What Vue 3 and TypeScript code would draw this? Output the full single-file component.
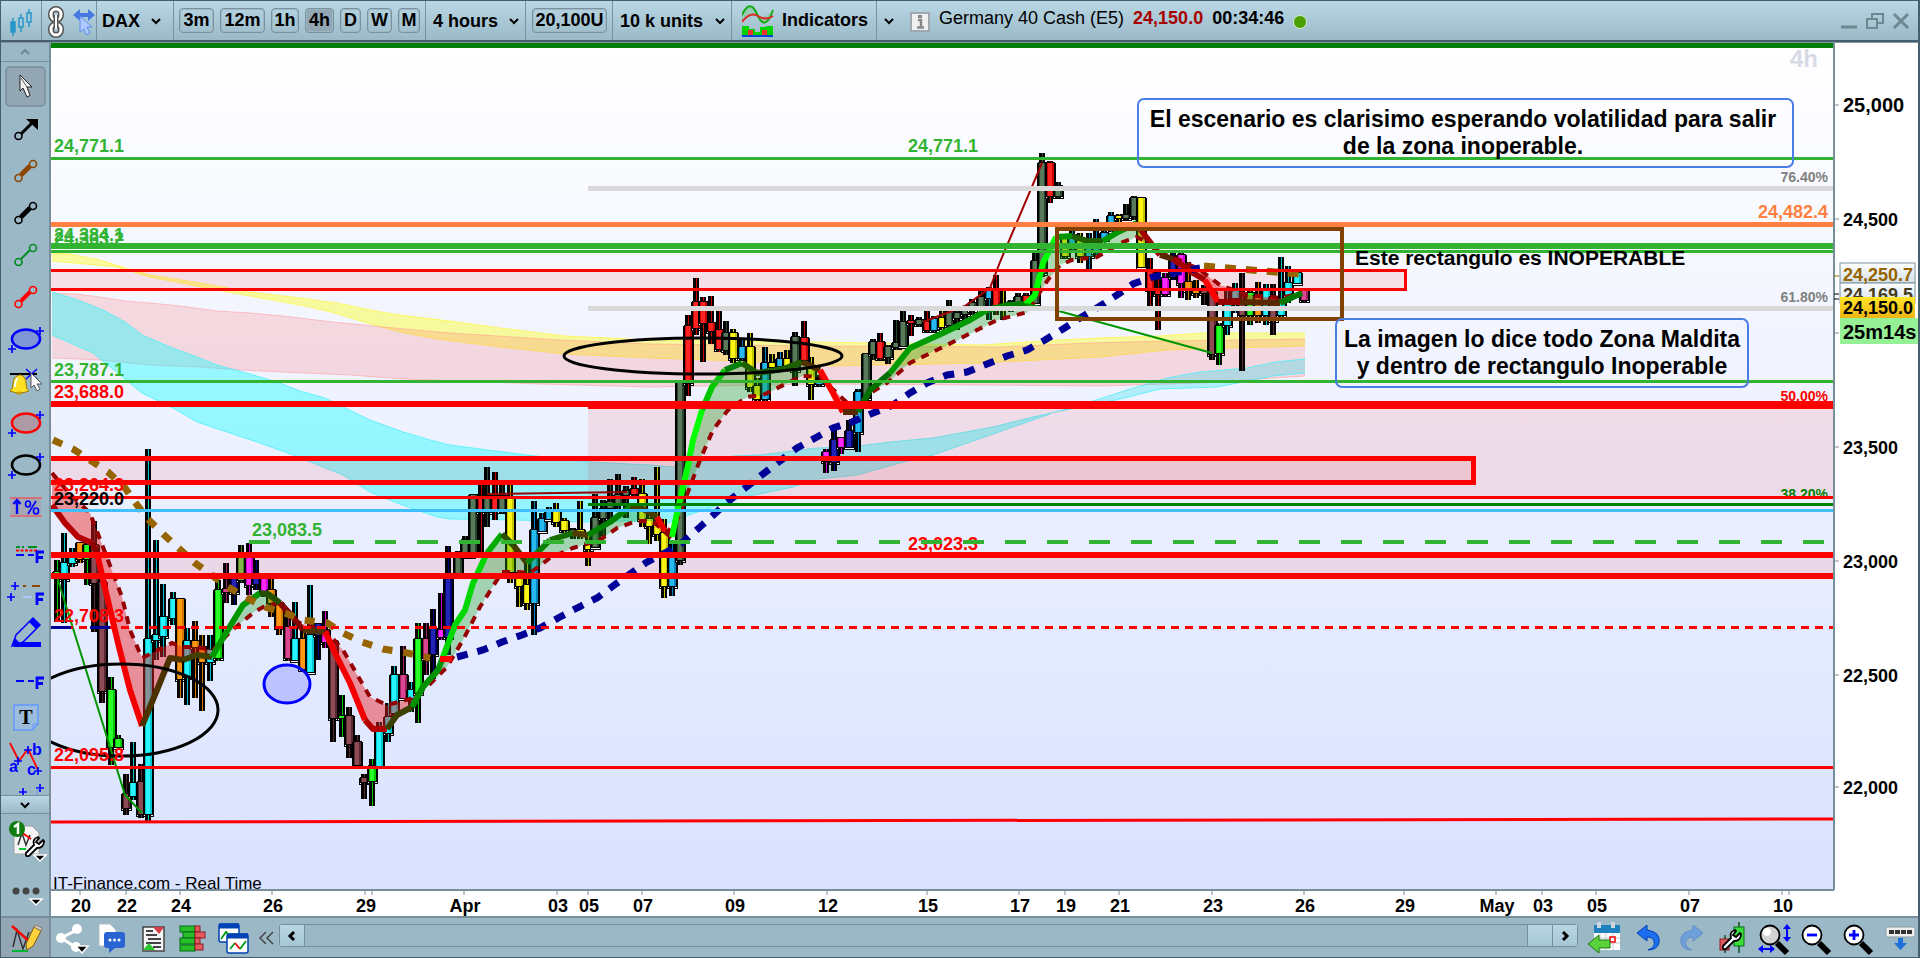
<script setup lang="ts">
type Pt = [number, number]
type Candle = [x: number, high: number, low: number, top: number, bottom: number, tone: string]

const tones: Record<string, { fill: string; shine: string }> = {
  g: { fill: '#00c800', shine: '#28ff28' },
  c: { fill: '#00c8d2', shine: '#28f5ff' },
  m: { fill: '#5a2832', shine: '#8c4b55' },
  o: { fill: '#d27800', shine: '#ff9614' },
  n: { fill: '#000078', shine: '#2323b4' },
  f: { fill: '#d200d2', shine: '#ff28ff' },
  p: { fill: '#a01e64', shine: '#dc4691' },
  l: { fill: '#557d28', shine: '#82b446' },
  d: { fill: '#28462d', shine: '#5a785a' },
  r: { fill: '#c80000', shine: '#ff2323' },
  y: { fill: '#c8c300', shine: '#faf514' },
  b: { fill: '#0082be', shine: '#28b9f0' },
}

const candles: Candle[] = [
  [57, 560, 622, 572, 576, 'g'], [64, 533, 623, 563, 579, 'c'], [72, 548, 567, 556, 563, 'c'], [80, 543, 563, 543, 559, 'o'],
  [87, 540, 585, 545, 559, 'g'], [94, 521, 632, 545, 583, 'm'], [102, 582, 703, 582, 691, 'm'], [111, 677, 765, 690, 747, 'g'],
  [118, 735, 748, 739, 747, 'g'], [126, 774, 815, 794, 808, 'm'], [133, 742, 800, 783, 796, 'c'], [141, 764, 818, 782, 814, 'm'],
  [148, 449, 821, 639, 814, 'c'], [156, 540, 660, 635, 640, 'c'], [163, 584, 657, 617, 636, 'c'], [173, 592, 625, 599, 618, 'c'],
  [180, 598, 698, 599, 679, 'o'], [187, 628, 705, 641, 677, 'c'], [195, 621, 698, 641, 647, 'o'], [202, 635, 711, 647, 662, 'o'],
  [210, 635, 681, 650, 662, 'c'], [218, 580, 661, 590, 658, 'g'], [226, 563, 603, 589, 592, 'p'], [234, 578, 605, 578, 592, 'n'],
  [241, 545, 582, 558, 580, 'l'], [249, 543, 595, 558, 585, 'f'], [256, 560, 590, 577, 584, 'n'], [264, 579, 597, 579, 592, 'f'],
  [271, 579, 617, 590, 603, 'o'], [279, 602, 635, 603, 627, 'o'], [288, 617, 661, 627, 658, 'p'], [295, 602, 660, 639, 660, 'c'],
  [303, 630, 672, 639, 669, 'o'], [310, 585, 673, 635, 672, 'c'], [318, 623, 660, 624, 635, 'n'], [325, 611, 648, 630, 642, 'f'],
  [333, 640, 742, 641, 718, 'm'], [342, 695, 737, 716, 718, 'g'], [349, 707, 758, 716, 744, 'm'], [357, 735, 765, 742, 765, 'm'],
  [364, 774, 799, 778, 782, 'm'], [372, 759, 806, 766, 781, 'g'], [379, 722, 766, 731, 766, 'c'], [388, 703, 742, 717, 733, 'c'],
  [394, 666, 720, 675, 713, 'c'], [403, 646, 698, 675, 698, 'p'], [411, 682, 712, 690, 698, 'c'], [418, 623, 723, 639, 693, 'g'],
  [426, 623, 675, 639, 658, 'p'], [433, 609, 679, 629, 654, 'n'], [441, 593, 640, 630, 637, 'f'], [448, 546, 655, 579, 637, 'n'],
  [458, 551, 575, 555, 573, 'd'], [465, 536, 558, 540, 556, 'd'], [473, 494, 559, 495, 555, 'd'], [481, 485, 553, 496, 512, 'r'],
  [487, 467, 527, 496, 512, 'd'], [495, 472, 520, 496, 510, 'r'], [502, 485, 513, 496, 511, 'd'], [510, 485, 583, 499, 572, 'y'],
  [519, 572, 607, 575, 586, 'y'], [527, 563, 610, 585, 603, 'y'], [534, 501, 635, 530, 603, 'b'], [542, 513, 532, 519, 531, 'b'],
  [549, 507, 520, 510, 519, 'b'], [556, 503, 527, 510, 522, 'y'], [564, 518, 533, 521, 530, 'y'], [573, 528, 539, 530, 532, 'd'],
  [580, 501, 539, 530, 532, 'y'], [588, 533, 566, 545, 549, 'y'], [595, 494, 548, 518, 547, 'd'], [603, 500, 536, 509, 518, 'd'],
  [610, 479, 520, 502, 508, 'd'], [618, 474, 510, 495, 503, 'd'], [626, 486, 518, 491, 495, 'd'], [634, 477, 498, 489, 494, 'r'],
  [642, 479, 527, 494, 519, 'y'], [649, 515, 544, 519, 526, 'y'], [657, 467, 541, 525, 534, 'y'], [664, 519, 598, 533, 586, 'y'],
  [672, 540, 596, 557, 586, 'b'], [680, 383, 565, 383, 560, 'd'], [688, 315, 396, 326, 383, 'r'], [696, 278, 335, 302, 328, 'r'],
  [703, 297, 362, 302, 323, 'r'], [711, 296, 344, 323, 331, 'r'], [719, 311, 352, 330, 349, 'r'], [726, 321, 355, 333, 350, 'd'],
  [733, 329, 363, 333, 358, 'y'], [742, 340, 360, 347, 358, 'b'], [750, 333, 392, 347, 387, 'y'], [757, 378, 409, 386, 399, 'y'],
  [765, 347, 409, 363, 399, 'b'], [772, 354, 373, 363, 367, 'y'], [780, 352, 370, 359, 366, 'b'], [787, 350, 370, 359, 366, 'y'],
  [795, 332, 386, 337, 370, 'd'], [804, 321, 363, 338, 360, 'r'], [811, 357, 400, 367, 384, 'y'], [819, 375, 386, 380, 384, 'b'],
  [826, 449, 473, 452, 461, 'f'], [834, 430, 471, 440, 462, 'n'], [841, 437, 454, 438, 447, 'f'], [849, 420, 448, 431, 447, 'n'],
  [858, 389, 452, 392, 432, 'b'], [866, 353, 400, 354, 398, 'd'], [873, 339, 360, 342, 354, 'd'], [880, 333, 360, 342, 358, 'r'],
  [888, 345, 364, 347, 357, 'd'], [896, 320, 350, 343, 347, 'd'], [903, 311, 347, 322, 346, 'd'], [911, 315, 336, 321, 323, 'r'],
  [919, 317, 327, 320, 324, 'd'], [927, 311, 332, 322, 330, 'r'], [934, 316, 332, 319, 330, 'b'], [942, 311, 330, 318, 327, 'y'],
  [949, 300, 328, 312, 325, 'd'], [957, 310, 330, 313, 318, 'd'], [965, 306, 322, 310, 314, 'd'], [972, 299, 315, 303, 310, 'd'],
  [981, 291, 307, 297, 306, 'd'], [989, 287, 320, 290, 298, 'b'], [996, 275, 315, 290, 305, 'r'], [1003, 290, 320, 304, 308, 'y'],
  [1011, 300, 312, 302, 305, 'b'], [1018, 293, 307, 297, 303, 'd'], [1026, 293, 309, 296, 302, 'r'], [1035, 253, 303, 261, 303, 'd'],
  [1042, 153, 277, 163, 273, 'd'], [1050, 161, 203, 163, 196, 'r'], [1058, 182, 198, 186, 196, 'd'], [1065, 236, 258, 239, 256, 'y'],
  [1072, 229, 250, 235, 245, 'b'], [1080, 233, 263, 238, 256, 'y'], [1089, 233, 271, 240, 256, 'b'], [1096, 219, 257, 242, 252, 'b'],
  [1104, 231, 241, 233, 239, 'b'], [1111, 212, 232, 216, 223, 'b'], [1119, 214, 223, 216, 218, 'y'], [1126, 204, 220, 215, 218, 'd'],
  [1134, 196, 220, 198, 216, 'd'], [1141, 197, 268, 198, 267, 'y'], [1150, 258, 306, 270, 289, 'r'], [1158, 270, 330, 288, 294, 'r'],
  [1165, 273, 296, 278, 294, 'f'], [1173, 253, 280, 258, 277, 'n'], [1181, 250, 298, 255, 283, 'f'], [1188, 262, 300, 282, 290, 'o'],
  [1196, 280, 298, 290, 293, 'o'], [1204, 285, 305, 291, 293, 'm'], [1212, 290, 360, 292, 354, 'm'], [1219, 323, 365, 326, 353, 'g'],
  [1227, 290, 335, 300, 325, 'c'], [1235, 283, 313, 290, 298, 'c'], [1242, 273, 371, 300, 315, 'm'], [1250, 290, 325, 293, 315, 'g'],
  [1258, 282, 323, 295, 315, 'o'], [1266, 284, 325, 291, 315, 'c'], [1273, 284, 335, 297, 320, 'm'], [1281, 257, 317, 303, 315, 'c'],
  [1288, 266, 303, 283, 295, 'c'], [1297, 272, 284, 273, 283, 'c'], [1304, 289, 302, 291, 300, 'p'],
]

const trend: { color: string; pts: Pt[] }[] = [
  { color: '#b40000', pts: [[52, 505], [65, 523], [78, 537], [92, 543]] },
  { color: '#8c0000', pts: [[97, 553]] },
  { color: '#f50000', pts: [[105, 588], [118, 643], [130, 690], [142, 726]] },
  { color: '#4b3200', pts: [[157, 690], [170, 658], [183, 660]] },
  { color: '#414100', pts: [[197, 655], [212, 657]] },
  { color: '#009600', pts: [[220, 643], [232, 623], [243, 605], [260, 593]] },
  { color: '#235000', pts: [[268, 594], [280, 603]] },
  { color: '#820000', pts: [[292, 616], [303, 630]] },
  { color: '#503200', pts: [[325, 632]] },
  { color: '#f50000', pts: [[337, 657], [350, 683], [365, 720]] },
  { color: '#b40000', pts: [[373, 729], [387, 729]] },
  { color: '#3c4100', pts: [[397, 715], [412, 707]] },
  { color: '#009100', pts: [[423, 687], [438, 670], [443, 657]] },
  { color: '#00d700', pts: [[455, 625], [465, 610], [473, 583], [487, 553]] },
  { color: '#00aa00', pts: [[502, 534]] },
  { color: '#285000', pts: [[514, 546]] },
  { color: '#463c00', pts: [[527, 563]] },
  { color: '#0a820a', pts: [[550, 540]] },
  { color: '#146e00', pts: [[573, 533]] },
  { color: '#503c00', pts: [[588, 535]] },
  { color: '#008200', pts: [[610, 522], [630, 507]] },
  { color: '#463c00', pts: [[643, 509], [657, 517]] },
  { color: '#eb0000', pts: [[665, 531]] },
  { color: '#960000', pts: [[672, 537]] },
  { color: '#00ff00', pts: [[678, 508], [687, 470], [693, 440], [702, 410]] },
  { color: '#00c800', pts: [[712, 387], [725, 370]] },
  { color: '#008200', pts: [[742, 363]] },
  { color: '#1e5f00', pts: [[757, 373], [783, 369], [802, 362]] },
  { color: '#503200', pts: [[820, 370]] },
  { color: '#ff0000', pts: [[833, 393], [843, 412]] },
  { color: '#5a2800', pts: [[858, 412]] },
  { color: '#006e00', pts: [[870, 390], [890, 373]] },
  { color: '#009b00', pts: [[910, 348], [943, 333], [970, 320], [987, 310]] },
  { color: '#008200', pts: [[1008, 305], [1026, 304]] },
  { color: '#00ff00', pts: [[1035, 295], [1043, 263], [1056, 237]] },
  { color: '#009600', pts: [[1072, 236]] },
  { color: '#1e5f00', pts: [[1087, 241], [1103, 241]] },
  { color: '#009600', pts: [[1118, 232], [1137, 223]] },
  { color: '#a00000', pts: [[1143, 233], [1160, 255]] },
  { color: '#5a2800', pts: [[1173, 259]] },
  { color: '#a50000', pts: [[1193, 273], [1205, 280]] },
  { color: '#ff0000', pts: [[1218, 302]] },
  { color: '#9b0000', pts: [[1240, 302]] },
  { color: '#5a2800', pts: [[1280, 303]] },
  { color: '#007800', pts: [[1293, 297], [1302, 293]] },
]

const signal: Pt[] = [
  [52, 473], [70, 494], [90, 513], [103, 547], [122, 597], [130, 630], [142, 658], [172, 643], [182, 647], [197, 647], [213, 650],
  [230, 632], [253, 613], [263, 607], [277, 603], [297, 622], [327, 632], [343, 650], [370, 697], [387, 705], [410, 699], [427, 687],
  [437, 677], [447, 667], [463, 640], [480, 607], [502, 572], [517, 572], [530, 573], [550, 558], [573, 548], [600, 540], [617, 528],
  [637, 521], [652, 521], [667, 533], [678, 518], [688, 492], [700, 460], [713, 430], [728, 410], [747, 397], [763, 395], [802, 376],
  [820, 377], [842, 398], [855, 410], [867, 395], [887, 383], [910, 363], [943, 347], [997, 320], [1028, 312], [1043, 287], [1050, 277],
  [1060, 265], [1072, 260], [1097, 257], [1123, 242], [1137, 237], [1147, 242], [1160, 253], [1180, 260], [1200, 270], [1220, 285],
  [1247, 295], [1280, 298], [1302, 293],
]

const trendPts: Pt[] = trend.flatMap((run) => run.pts)
const toPoints = (pts: Pt[]) => pts.map((p) => p.join(',')).join(' ')

const trendRuns = trend.map((run, i) => {
  const previous = i > 0 ? trend[i - 1].pts.slice(-1) : []
  return { color: run.color, points: toPoints([...previous, ...run.pts]) }
})

function valueAt(pts: Pt[], x: number): number {
  for (let i = 1; i < pts.length; i++) {
    const [x0, y0] = pts[i - 1]
    const [x1, y1] = pts[i]
    if (x <= x1) return y0 + ((y1 - y0) * (x - x0)) / (x1 - x0)
  }
  return pts[pts.length - 1][1]
}

const ribbon: { up: boolean; points: string }[] = []
let upper: Pt[] = []
let lower: Pt[] = []
let rising = false
for (let x = 52; x <= 1302; x += 2) {
  const a = valueAt(trendPts, x)
  const b = valueAt(signal, x)
  const up = b > a
  if (upper.length && up !== rising) {
    ribbon.push({ up: rising, points: toPoints([...upper, ...lower.slice().reverse()]) })
    upper = []
    lower = []
  }
  rising = up
  upper.push([x, Math.round(a)])
  lower.push([x, Math.round(b)])
}
ribbon.push({ up: rising, points: toPoints([...upper, ...lower.slice().reverse()]) })

const brownDots = '53,440 73,449 90,460 108,472 125,488 137,505 148,519 163,534 195,563 228,587 247,598 265,607 285,613 303,620 327,623 343,633 362,642 383,649 403,652 430,658'
const blueDots = '457,657 483,650 502,642 522,635 540,628 560,617 577,608 597,598 613,586 647,562 667,552 683,542 700,527 730,500 763,474 797,448 817,437 833,428 852,422 873,413 893,405 910,393 927,383 947,375 967,372 987,364 1007,356 1027,350 1045,340 1063,329 1080,318 1100,306 1117,295 1133,284 1153,277 1173,273 1200,268'

interface Cloud { fill: string; stroke: string; top: string; bottom: string }
const clouds: Cloud[] = [
  {
    fill: 'rgba(255,255,0,.38)', stroke: 'rgba(255,245,60,.7)',
    top: '52,253 70,254 100,260 125,268 150,275 200,283 250,292 292,297 337,303 375,311 400,315 450,321 500,328 565,336 650,340 817,342 983,345 1040,341 1100,338 1160,336 1200,333 1305,333',
    bottom: '1305,346 1230,348 1167,350 1100,357 1040,360 1000,362 983,363 833,366 740,361 650,358 565,354 500,347 437,339 400,332 367,323 335,313 310,307 217,290 150,277 117,267 85,264 52,261',
  },
  {
    fill: 'rgba(255,90,90,.19)', stroke: 'rgba(255,140,140,.45)',
    top: '52,293 76,294 100,297 125,301 150,303 180,306 217,311 250,313 283,316 333,322 383,327 450,333 560,340 650,344 817,346 1000,347 1090,343 1167,341 1305,339',
    bottom: '1305,376 1200,383 1100,386 983,385 817,384 650,387 540,384 403,379 350,375 283,372 240,370 200,367 150,365 100,360 52,358',
  },
  {
    fill: 'rgba(0,255,255,.37)', stroke: 'rgba(70,240,250,.75)',
    top: '52,292 75,299 103,310 125,322 142,335 170,347 197,357 217,365 250,374 277,382 300,391 325,398 343,407 370,420 403,432 430,440 450,445 480,449 527,455 590,462 650,465 673,467 700,462 733,456 760,455 817,448 850,447 890,442 933,438 993,427 1033,417 1060,411',
    bottom: '1050,414 993,434 933,455 900,463 857,475 817,479 793,487 740,498 683,517 668,523 630,521 583,522 517,520 450,519 437,517 397,503 370,492 343,475 293,455 260,443 233,434 197,422 173,408 142,393 120,375 93,353 52,335',
  },
  {
    fill: 'rgba(0,220,230,.26)', stroke: 'rgba(70,240,250,.75)',
    top: '1060,411 1090,402 1127,390 1167,378 1200,372 1247,368 1275,362 1305,359',
    bottom: '1305,373 1273,376 1217,387 1160,389 1120,399 1060,411',
  },
]

interface Level { y: number; w: number; color: string; from?: number; dash?: string }
const levels: Level[] = [
  { y: 157, w: 3, color: '#32b432' },
  { y: 186, w: 5, color: '#d9d9d9', from: 588 },
  { y: 222, w: 5, color: '#ff8040' },
  { y: 243, w: 6, color: '#32b432' },
  { y: 250, w: 3, color: '#32b432' },
  { y: 306, w: 5, color: '#d9d9d9', from: 588 },
  { y: 380, w: 3, color: '#32b432' },
  { y: 401, w: 6, color: '#ff0000' },
  { y: 401, w: 8, color: '#ff0000', from: 588 },
  { y: 496, w: 3, color: '#ff0000' },
  { y: 503, w: 3, color: '#008000', from: 588 },
  { y: 509, w: 3, color: '#40bfff' },
  { y: 552, w: 6, color: '#ff0000' },
  { y: 573, w: 6, color: '#ff0000' },
  { y: 766, w: 3, color: '#ff0000' },
]

interface Label { x: number; y: number; text: string; color: string; size?: number; end?: boolean }
const underLabels: Label[] = [
  { x: 54, y: 241, text: '24,384.1', color: '#32b432' },
  { x: 54, y: 245, text: '24,363.2', color: '#32b432' },
  { x: 54, y: 491, text: '23,264.3', color: '#ff0000' },
  { x: 908, y: 550, text: '23,023.3', color: '#ff0000' },
  { x: 1828, y: 499, text: '38.20%', color: '#008000', size: 14, end: true },
]
const labels: Label[] = [
  { x: 54, y: 152, text: '24,771.1', color: '#32b432' },
  { x: 908, y: 152, text: '24,771.1', color: '#32b432' },
  { x: 54, y: 376, text: '23,787.1', color: '#32b432' },
  { x: 54, y: 398, text: '23,688.0', color: '#ff0000' },
  { x: 54, y: 505, text: '23,220.0', color: '#000000' },
  { x: 252, y: 536, text: '23,083.5', color: '#32b432' },
  { x: 54, y: 622, text: '22,708.3', color: '#ff0000' },
  { x: 54, y: 761, text: '22,095.8', color: '#ff0000' },
  { x: 1828, y: 182, text: '76.40%', color: '#808080', size: 14, end: true },
  { x: 1828, y: 302, text: '61.80%', color: '#808080', size: 14, end: true },
  { x: 1828, y: 401, text: '50.00%', color: '#ff0000', size: 14, end: true },
  { x: 1828, y: 218, text: '24,482.4', color: '#ff8040', end: true },
  { x: 1818, y: 67, text: '4h', color: '#d8d9e6', size: 24, end: true },
]

const priceTicks = [
  { y: 105, text: '25,000', size: 20 }, { y: 219, text: '24,500', size: 18 }, { y: 447, text: '23,500', size: 18 },
  { y: 561, text: '23,000', size: 18 }, { y: 675, text: '22,500', size: 18 }, { y: 787, text: '22,000', size: 18 },
]
const dateTicks: [number, string][] = [
  [81, '20'], [127, '22'], [181, '24'], [273, '26'], [366, '29'], [465, 'Apr'], [558, '03'], [589, '05'], [643, '07'], [735, '09'],
  [828, '12'], [928, '15'], [1020, '17'], [1066, '19'], [1120, '21'], [1213, '23'], [1305, '26'], [1405, '29'], [1497, 'May'],
  [1543, '03'], [1597, '05'], [1690, '07'], [1783, '10'],
]

const periods = [
  { text: '3m', w: 35 }, { text: '12m', w: 45 }, { text: '1h', w: 28 }, { text: '4h', w: 29, on: true },
  { text: 'D', w: 21 }, { text: 'W', w: 25 }, { text: 'M', w: 22 },
]

const segment = (color: string, w: number) =>
  `<path d="M20 25L29 16" stroke="${color}" stroke-width="${w}"/><g fill="#9bb8c6" stroke="${color}" stroke-width="1.6"><circle cx="17.500" cy="28" r="3.500"/><circle cx="32" cy="14" r="3.500"/></g>`
const plus = (x: number, y: number) => `<path d="M${x - 4} ${y}h8M${x} ${y - 4}v8" stroke="#0000ff" stroke-width="1.700"/>`
const oval = (color: string, fill: string) =>
  `<ellipse cx="25" cy="21" rx="14" ry="9.500" fill="${fill}" stroke="${color}" stroke-width="2.600"/>${plus(39, 13)}${plus(11, 31)}`
const letterF = '<path d="M36 31V20H43M36 25.500H42" fill="none" stroke="#0000ff" stroke-width="2.800"/>'
const wrench = '<path d="M0 16L8 8Q6 2 12 0L13 1L10 5L13 7L17 3L18 4Q18 11 11 11L3 19Q-1 20 0 16Z" fill="#fff" stroke="#000" stroke-width="1.800"/>'

const tools = [
  { name: 'Pointer', art: '<path d="M19 9V25L22 22L26 31L29 29.500L26 21H31Z" fill="#f4f4f4" stroke="#222" stroke-width="1"/><path d="M20 12L26 21L29 29" stroke="#555" fill="none"/>' },
  { name: 'Arrow', art: '<path d="M20 26L31 15" stroke="#000" stroke-width="3"/><path d="M25 11H37V22Z"/><circle cx="17.500" cy="28" r="3.500" fill="#9bb8c6" stroke="#000" stroke-width="1.600"/>' },
  { name: 'Brown segment', art: segment('#8c4600', 5) },
  { name: 'Black segment', art: segment('#000', 5) },
  { name: 'Green segment', art: segment('#008c1e', 2) },
  { name: 'Red segment', art: segment('#ff0000', 4) },
  { name: 'Blue ellipse', art: oval('#0000ff', '#7f96d6') },
  { name: 'Alert', art: '<path d="M9 14H36" stroke="#000" stroke-width="2"/><path d="M25 9L36 19M36 9L25 19" stroke="#0000ff" stroke-width="1.500"/><path d="M18 15Q12 17 12 24Q12 29 9 31Q18 35 28 31Q25 29 25 24Q25 17 20 15Z" fill="#ffe123" stroke="#967800"/><ellipse cx="18" cy="33" rx="3" ry="1.500" fill="#c89600"/><path d="M14 27Q14 20 17 18" stroke="#fff" stroke-width="2" fill="none"/><path d="M30 13V28L33 25L36 31L39 29L36 24H41Z" fill="#fff" stroke="#555"/>' },
  { name: 'Red ellipse', art: oval('#ff0000', '#ae9aa4') },
  { name: 'Black ellipse', art: oval('#000', 'none') },
  { name: 'Percent', art: '<rect x="9" y="11" width="31" height="19" fill="#a3a7b5"/><path d="M9 12H41M9 30H41" stroke="#e65f64" stroke-width="1.500"/><path d="M16 28V16M12.500 18L16 14L19.500 18" stroke="#0000ff" stroke-width="2.400" fill="none"/><g fill="none" stroke="#0000ff" stroke-width="1.700"><ellipse cx="27" cy="18" rx="2.500" ry="3"/><ellipse cx="35" cy="25" rx="2.500" ry="3"/><path d="M35 15L27 28"/></g>' },
  { name: 'Fibonacci lines', art: '<g stroke-width="2"><path d="M15 19H36" stroke="#008c1e" stroke-dasharray="4 2 2 4 9"/><path d="M15 22.500H36" stroke="#ff0000" stroke-dasharray="3 1.500"/><path d="M15 27H33" stroke="#0000ff" stroke-dasharray="8 4"/></g><g transform="translate(0 4)">' + letterF + '</g>' },
  { name: 'Fibonacci points', art: plus(14, 16) + plus(10, 27) + '<path d="M22 16H25M31 16H39" stroke="#8c4600" stroke-width="2"/><path d="M22 27H31" stroke="#b4c8ff" stroke-width="2"/><g transform="translate(0 4)">' + letterF + '</g>' },
  { name: 'Pencil', art: '<path d="M12 35H40V30H17Z" fill="#0000ff"/><path d="M11 34L15 23L32 6L39 13L22 30Z" fill="#9bb8c6" stroke="#0000ff" stroke-width="1.500"/><path d="M28 10L32 6L39 13L35 17Z M11 34L14 26L19 31Z" fill="#0000ff"/>' },
  { name: 'Fibonacci extension', art: '<path d="M15 27H33" stroke="#0000ff" stroke-width="2" stroke-dasharray="8 4"/><g transform="translate(0 4)">' + letterF + '</g>' },
  { name: 'Text', art: '<path d="M13 9H37V28L31 34H13Z" fill="#9bbcdc" stroke="#6496ff" stroke-width="1.500"/><path d="M37 28H32V34" fill="none" stroke="#6496ff"/><text x="25" y="28" text-anchor="middle" font-family="Liberation Serif, serif" font-weight="700" font-size="20">T</text>' },
  { name: 'Pattern', art: '<path d="M9 5L18 23L27 11L37 32" fill="none" stroke="#ff0000" stroke-width="1.800"/>' + plus(17, 23) + plus(27, 12) + plus(37, 33) + '<g font-family="Liberation Sans, sans-serif" font-size="16" font-weight="700" fill="#0000ff"><text x="8" y="34">a</text><text x="31" y="17">b</text><text x="26" y="37">c</text></g>' },
  { name: 'More points', art: plus(22, 12) + plus(39, 8) + '<path d="M34 18L38 8" stroke="#6496ff"/>' },
]

const leftActions = [
  { name: 'Share', art: '<path d="M26 11L10 19L26 29" fill="none" stroke="#fff" stroke-width="3"/><g fill="#fff"><circle cx="26" cy="10" r="5"/><circle cx="10" cy="19" r="5"/><circle cx="25" cy="28" r="5"/></g><path d="M25 27H37L31 34Z" stroke="#fff" stroke-width="1.500"/>' },
  { name: 'Messages', art: '<path d="M7 5H18L24 11V27H7Z" fill="#fff" stroke="#b4bec8"/><path d="M15 13H30Q33 13 33 16V26Q33 29 30 29H23L17 34V29H15Q12 29 12 26V16Q12 13 15 13Z" fill="#2864d2"/><g fill="#fff"><circle cx="18" cy="21" r="1.500"/><circle cx="22.500" cy="21" r="1.500"/><circle cx="27" cy="21" r="1.500"/></g>' },
  { name: 'Orders', art: '<rect x="10" y="8" width="21" height="24" fill="#f5f5f5" stroke="#444" stroke-width="1.500"/><path d="M13 12H20M13 16H24M15 20H28M13 24H28M20 28H28" stroke="#444" stroke-width="2"/><path d="M20 8H31L26 15Z" fill="#d73c46"/><path d="M10 31L16 24L22 31Z" fill="#28c828"/>' },
  { name: 'Order book', art: '<g fill="#28be28" stroke="#006e14"><rect x="6" y="7" width="15" height="6"/><rect x="9" y="13" width="12" height="6"/><rect x="6" y="19" width="15" height="6"/><rect x="6" y="26" width="15" height="6"/></g><g fill="#e65a5f" stroke="#8c1e23"><rect x="21" y="7" width="5" height="6"/><rect x="21" y="13" width="10" height="6"/><rect x="21" y="19" width="5" height="6"/><rect x="21" y="25" width="8" height="6"/></g>' },
  { name: 'Windows', art: '<g fill="#fff" stroke="#0041b4" stroke-width="1.500"><rect x="4" y="5" width="20" height="18" rx="2"/><path d="M4 7H24" stroke-width="5"/><rect x="12" y="15" width="21" height="19" rx="2"/><path d="M12 17H33" stroke-width="5"/></g><g fill="none" stroke-width="1.800"><path d="M6 20L11 13L13 15" stroke="#009b14"/><path d="M15 30L20 24" stroke="#009b14"/><path d="M20 24L25 30" stroke="#f00"/><path d="M25 30L31 22" stroke="#009b14"/></g>' },
]
const magnifier = (inner: string) =>
  `<path d="M23 24L33 34" stroke="#000" stroke-width="6"/><circle cx="16" cy="16" r="9.500" fill="#fff" stroke="#000" stroke-width="1.800"/>${inner}`
const rightActions = [
  { name: 'Go to date', art: '<rect x="8" y="6" width="26" height="25" fill="#fff"/><path d="M8 6H34V14H8Z" fill="#1e82be"/><path d="M13 3V9M27 3V9" stroke="#cdd7e1" stroke-width="4"/><path d="M8 19H34M8 24H34M14 14V31M20 14V31M27 14V31" stroke="#c3cdd7"/><rect x="24" y="18" width="5" height="5" fill="#fff" stroke="#f00" stroke-width="1.500"/><path d="M2 25L13 16V21H24V29H13V34Z" fill="#5ad23c" stroke="#1e7814"/>' },
  { name: 'Undo', art: '<path d="M9 14L19 6V11Q33 13 31 24Q29 31 20 31Q28 28 26 22Q25 18 19 18V22Z" fill="#1e6ef0" stroke="#0041b4"/>' },
  { name: 'Redo', art: '<path d="M33 14L23 6V11Q9 13 11 24Q13 31 22 31Q14 28 16 22Q17 18 23 18V22Z" fill="#6ea0dc" stroke="#648cc8"/>' },
  { name: 'Chart settings', art: '<path d="M13 16V34M27 3V34" stroke="#0a5014" stroke-width="1.500"/><rect x="8" y="20" width="9" height="11" fill="#dc5a5f" stroke="#8c1e23"/><rect x="22" y="8" width="10" height="19" fill="#3cdc3c" stroke="#006e14"/><g transform="translate(11 11)">' + wrench + '</g>' },
  { name: 'Auto zoom', art: '<path d="M23 24L33 34" stroke="#000" stroke-width="6"/><circle cx="16" cy="16" r="9.500" fill="#d2d2d2" stroke="#000" stroke-width="1.800"/><circle cx="13" cy="13" r="4" fill="#fff"/><path d="M33 7V21M7 30H18" stroke="#0000ff" stroke-width="2"/><path d="M29 10L33 5L37 10ZM29 18L33 23L37 18ZM9 26L4 30L9 34ZM16 26L21 30L16 34Z" fill="#0000ff"/>' },
  { name: 'Zoom out', art: magnifier('<path d="M11 16H21" stroke="#0000ff" stroke-width="2.800"/>') },
  { name: 'Zoom in', art: magnifier('<path d="M11 16H21M16 11V21" stroke="#0000ff" stroke-width="2.800"/>') },
  { name: 'Hide bar', art: '<rect x="6" y="8" width="29" height="10" rx="1" fill="#eee" stroke="#8c9ba5"/><path d="M9 13H33" stroke="#333" stroke-width="4" stroke-dasharray="5 1"/><path d="M18 19H23V24H27L20.500 31L14 24H18Z" fill="#1e6edc"/>' },
]
</script>

<template>
  <div class="app">
    <header class="toolbar">
      <div class="cell w-style">
        <button class="plain" aria-label="Chart style">
          <svg width="28" height="32" viewBox="0 0 28 32"><g stroke="#2896c8" stroke-width="1.500" fill="#a5cbdc"><path d="M6 13V31M14 9V27M22 4V22" /><rect x="4" y="17" width="4" height="10" fill="#2896c8" /><rect x="12" y="13" width="4" height="9" /><rect x="20" y="8" width="4" height="9" /></g></svg>
        </button>
      </div>
      <div class="cell w-link">
        <button class="plain" aria-label="Link windows">
          <svg width="20" height="34" viewBox="0 0 20 34"><g fill="none"><rect x="5" y="5" width="10" height="11" rx="5" stroke="#555" stroke-width="6" /><rect x="5" y="20" width="10" height="11" rx="5" stroke="#555" stroke-width="6" /><rect x="5" y="5" width="10" height="11" rx="5" stroke="#fff" stroke-width="3" /><rect x="5" y="20" width="10" height="11" rx="5" stroke="#fff" stroke-width="3" /><path d="M10 11V25" stroke="#555" stroke-width="5" /><path d="M10 11V25" stroke="#fff" stroke-width="2" /></g></svg>
        </button>
        <button class="plain" aria-label="Move chart">
          <svg width="24" height="32" viewBox="0 0 24 32"><path d="M1 10L8 4V8H16V4L23 10L16 16V12H8V16Z" fill="#4678e1" /><path d="M8 11V27L12 24L14 30L18 28L15 22H20Z" fill="#afc8ff" stroke="#5a8cf0" /></svg>
        </button>
      </div>
      <div class="cell w-symbol pick">
        <select aria-label="Instrument"><option>DAX</option></select>
        <svg class="chev" viewBox="0 0 10 6"><path d="M1 1L5 5L9 1" /></svg>
      </div>
      <div class="cell w-periods">
        <button v-for="p in periods" :key="p.text" class="chip" :class="{ on: p.on }" :style="{ width: p.w + 'px' }">{{ p.text }}</button>
      </div>
      <div class="cell w-frame pick">
        <select aria-label="Time frame"><option>4 hours</option></select>
        <svg class="chev" viewBox="0 0 10 6"><path d="M1 1L5 5L9 1" /></svg>
      </div>
      <div class="cell w-count"><button class="chip wide">20,100U</button></div>
      <div class="cell w-units pick">
        <select aria-label="Units"><option>10 k units</option></select>
        <svg class="chev" viewBox="0 0 10 6"><path d="M1 1L5 5L9 1" /></svg>
      </div>
      <div class="cell w-ind">
        <button class="plain indicators">
          <svg width="32" height="32" viewBox="0 0 32 32"><path d="M0 9Q8 -7 15 9Q23 28 31 5Q24 14 14 11Q6 9 0 16Z" fill="#82c89b" opacity=".6" /><path d="M0 10Q8 -7 15 9Q23 28 31 5" fill="none" stroke="#14aa14" stroke-width="2" /><path d="M0 17Q8 6 16 11Q24 16 31 11" fill="none" stroke="#e12828" stroke-width="2" /><path d="M0 21H7V24H13V27H18V22H24V21H31V30H0Z" fill="#00d200" /><path d="M6 25H11V30H6ZM20 25H25V30H20Z" fill="#f03232" /><path d="M0 31H31" stroke="#0046dc" stroke-width="2" /></svg>
          <span>Indicators</span>
        </button>
      </div>
      <button class="plain drop" aria-label="Indicator list"><svg class="chev" viewBox="0 0 10 6"><path d="M1 1L5 5L9 1" /></svg></button>
      <div class="quote">
        <button class="plain info" aria-label="Information"><svg width="20" height="20" viewBox="0 0 20 20"><rect x="1" y="1" width="18" height="18" fill="#f0f0f0" stroke="#a0a8ae" stroke-width="2" /><path d="M8 8H11V15M7 15.500H14" stroke="#888" stroke-width="2.500" fill="none" /><rect x="8" y="3" width="4" height="3" fill="#888" /></svg></button>
        <span>Germany 40 Cash (E5)</span>
        <strong class="last">24,150.0</strong>
        <strong>00:34:46</strong>
        <i class="live"></i>
      </div>
      <div class="window-buttons">
        <button class="plain" aria-label="Minimize"><svg width="18" height="18" viewBox="0 0 18 18"><path d="M1 15H17" stroke="#6e8791" stroke-width="3" /></svg></button>
        <button class="plain" aria-label="Restore"><svg width="18" height="18" viewBox="0 0 18 18"><g fill="none" stroke="#6e8791" stroke-width="2"><path d="M6 6V2H17V11H12" /><rect x="1" y="7" width="10" height="9" /></g></svg></button>
        <button class="plain" aria-label="Close"><svg width="18" height="18" viewBox="0 0 18 18"><path d="M2 2L16 16M16 2L2 16" stroke="#6e8791" stroke-width="3" /></svg></button>
      </div>
    </header>

    <div class="body">
      <aside class="tools">
        <button class="fold" aria-label="Scroll up"><svg class="chev dim" viewBox="0 0 10 6"><path d="M1 5L5 1L9 5" /></svg></button>
        <div class="tool-list">
          <button v-for="(t, i) in tools" :key="t.name" class="tool" :class="{ on: i === 0 }" :aria-label="t.name">
            <svg width="48" height="42" viewBox="0 0 48 42">
              <rect v-if="i === 0" x="5" y="1" width="39" height="39" rx="4" fill="#92a7b3" stroke="#768e9a" stroke-width="1.500" />
              <g v-html="t.art"></g>
            </svg>
          </button>
        </div>
        <button class="fold more" aria-label="Scroll down"><svg class="chev" viewBox="0 0 10 6"><path d="M1 1L5 5L9 1" /></svg></button>
        <button class="tool tall" aria-label="Drawing settings">
          <svg width="48" height="54" viewBox="0 0 48 54"><path d="M13 12H31L38 19V40H13Z" fill="#f5f5f5" stroke="#a0a0a0" /><path d="M17 31L21 19L25 31L29 21" fill="none" stroke="#333" stroke-width="1.500" /><path d="M20 18L30 25" stroke="#f00" stroke-width="2" /><path d="M18 35H25" stroke="#00c832" stroke-width="2" /><g transform="translate(25 23)" v-html="wrench"></g><circle cx="16" cy="15" r="8" fill="#0f7d0f" /><path d="M13 13L17 10V20" fill="none" stroke="#fff" stroke-width="2.500" /><path d="M33 41H45L39 47Z" stroke="#fff" stroke-width="1.500" /></svg>
        </button>
        <button class="tool dots" aria-label="More tools">
          <svg width="48" height="42" viewBox="0 0 48 42"><g fill="#444"><circle cx="15" cy="20" r="3.500" /><circle cx="25" cy="20" r="3.500" /><circle cx="35" cy="20" r="3.500" /></g><path d="M29 28H41L35 34Z" stroke="#fff" stroke-width="1.500" /></svg>
        </button>
      </aside>

      <svg class="chart" viewBox="51 43 1867 873" preserveAspectRatio="none" role="img" aria-label="DAX price chart">
        <defs>
          <linearGradient id="sky" x1="0" y1="0" x2="0" y2="1"><stop offset="0" stop-color="#ffffff" /><stop offset="1" stop-color="#d9e2ff" /></linearGradient>
          <linearGradient id="gold" x1="0" y1="0" x2="0" y2="1"><stop offset="0" stop-color="#ffe628" /><stop offset="1" stop-color="#f0b414" /></linearGradient>
          <linearGradient id="pale" x1="0" y1="0" x2="0" y2="1"><stop offset="0" stop-color="#ffffff" /><stop offset="1" stop-color="#d2e1eb" /></linearGradient>
          <clipPath id="plot"><rect x="51" y="43" width="1782" height="847" /></clipPath>
        </defs>
        <rect x="51" y="43" width="1867" height="873" fill="#fff" />
        <rect x="51" y="43" width="1782" height="847" fill="url(#sky)" />

        <g clip-path="url(#plot)">
          <g v-for="(c, i) in clouds" :key="i">
            <polygon :points="c.top + ' ' + c.bottom" :fill="c.fill" />
            <polyline :points="c.top" fill="none" :stroke="c.stroke" />
            <polyline :points="c.bottom" fill="none" :stroke="c.stroke" />
          </g>
          <g fill="#ff0000" fill-opacity=".09">
            <rect x="40" y="270" width="1365" height="18" />
            <rect x="588" y="405" width="1245" height="92" />
            <rect x="40" y="459" width="1433" height="24" />
            <rect x="40" y="555" width="1793" height="21" />
          </g>

          <g shape-rendering="crispEdges">
            <g v-for="(k, i) in candles" :key="i">
              <rect :x="k[0] - 5" :y="k[3]" width="10" :height="k[4] - k[3] + 2" fill="#fff" stroke="#000" stroke-width="1" />
              <rect :x="k[0] - 3" :y="k[1]" width="6" :height="k[2] - k[1]" fill="#000" />
              <rect :x="k[0]" :y="k[1]" width="1" :height="k[2] - k[1]" :fill="tones[k[5]].fill" />
              <rect :x="k[0] - 4" :y="k[3] - 1" width="9" :height="k[4] - k[3] + 2" fill="#000" />
              <rect :x="k[0] - 3" :y="k[3]" width="7" :height="k[4] - k[3]" :fill="tones[k[5]].fill" />
              <rect :x="k[0] - 2" :y="k[3]" width="4" :height="k[4] - k[3]" :fill="tones[k[5]].shine" />
            </g>
          </g>

          <polygon v-for="(r, i) in ribbon" :key="'r' + i" :points="r.points" :fill="r.up ? 'rgba(30,160,30,.34)' : 'rgba(235,30,30,.45)'" />
          <g fill="none">
            <polyline :points="toPoints(signal)" stroke="#960000" stroke-width="4" stroke-dasharray="8 7" />
            <polyline v-for="(r, i) in trendRuns" :key="'t' + i" :points="r.points" :stroke="r.color" stroke-width="6" stroke-linejoin="round" />
            <polyline :points="brownDots" stroke="#966400" stroke-width="7" stroke-dasharray="10 11" />
            <polyline points="1204,266 1240,269 1300,274" stroke="#966400" stroke-width="7" stroke-dasharray="11 10" />
            <polyline :points="blueDots" stroke="#000096" stroke-width="7" stroke-dasharray="11 10" />
            <polyline points="923,322 965,306 990,288 1000,262 1042,163" stroke="#a00000" stroke-width="2" />
            <path d="M487 494L627 492" stroke="#960000" stroke-width="2" />
            <path d="M57 577L125 795L142 813M1026 304L1055 310L1212 353" stroke="#009600" stroke-width="2" />
          </g>

          <text v-for="(l, i) in underLabels" :key="'u' + i" :x="l.x" :y="l.y" :fill="l.color" :font-size="l.size ?? 18" :text-anchor="l.end ? 'end' : 'start'">{{ l.text }}</text>
          <rect x="51" y="43" width="1782" height="5" fill="#008000" />
          <rect v-for="(l, i) in levels" :key="'l' + i" :x="l.from ?? 51" :y="l.y" :width="1833 - (l.from ?? 51)" :height="l.w" :fill="l.color" />
          <path d="M51 822L1833 819" stroke="#ff0000" stroke-width="3" />
          <g fill="none" shape-rendering="crispEdges">
            <path d="M249 542H1833" stroke="#32b432" stroke-width="4" stroke-dasharray="21 21" />
            <path d="M51 627H1833" stroke="#ff0000" stroke-width="3" stroke-dasharray="8 6" />
            <path d="M51 627H71M90 627H110" stroke="#000096" stroke-width="3" />
            <path d="M440 659H452" stroke="#ff0000" stroke-width="6" />
            <rect x="30" y="270" width="1375" height="19" stroke="#ff0000" stroke-width="3" />
            <rect x="30" y="458" width="1443" height="24" stroke="#ff0000" stroke-width="5" />
            <rect x="1057" y="229" width="285" height="90" stroke="#824100" stroke-width="4" />
          </g>
          <g fill="none" stroke="#000" stroke-width="3">
            <ellipse cx="121" cy="710" rx="97" ry="46" />
            <ellipse cx="703" cy="356" rx="139" ry="18" />
          </g>
          <ellipse cx="287" cy="684" rx="23" ry="19" fill="rgba(0,0,255,.16)" stroke="#0000ff" stroke-width="3" />

          <text v-for="(l, i) in labels" :key="'x' + i" :x="l.x" :y="l.y" :fill="l.color" :font-size="l.size ?? 18" :text-anchor="l.end ? 'end' : 'start'">{{ l.text }}</text>
          <g fill="none" stroke="#4b7de6" stroke-width="2">
            <rect x="1138" y="99" width="655" height="68" rx="6" />
            <rect x="1336" y="319" width="412" height="68" rx="6" />
          </g>
          <g font-size="23" text-anchor="middle">
            <text x="1463" y="127">El escenario es clarisimo esperando volatilidad para salir</text>
            <text x="1463" y="154">de la zona inoperable.</text>
            <text x="1542" y="347">La imagen lo dice todo Zona Maldita</text>
            <text x="1542" y="374">y dentro de rectangulo Inoperable</text>
          </g>
          <text x="1355" y="265" font-size="21">Este rectangulo es INOPERABLE</text>
          <text class="source" x="53" y="889" font-size="17">IT-Finance.com - Real Time</text>
        </g>

        <g stroke="#788f9b">
          <path d="M1834 43V890M51 890H1834" fill="none" stroke-width="2" />
          <path v-for="t in priceTicks" :key="t.y" :d="`M1834 ${t.y}h5`" />
          <path d="M1834 333h5" />
          <path v-for="d in dateTicks" :key="d[0]" :d="`M${d[0] - 1} 891v4`" />
          <path d="M372 891v4M1789 891v4" />
        </g>
        <text v-for="t in priceTicks" :key="t.text" x="1843" :y="t.y + 7" :font-size="t.size">{{ t.text }}</text>
        <text v-for="d in dateTicks" :key="'d' + d[0]" :x="d[0]" y="912" font-size="18" text-anchor="middle">{{ d[1] }}</text>

        <g stroke="#788f9b" stroke-width="1">
          <rect x="1840" y="263" width="75" height="20" fill="url(#pale)" />
          <rect x="1840" y="283" width="75" height="20" fill="url(#pale)" />
        </g>
        <path d="M1834 276h5" stroke="#966400" />
        <path d="M1834 294h5M1834 299h5" stroke="#000" />
        <text x="1843" y="281" font-size="18" fill="#966400">24,250.7</text>
        <text x="1843" y="301" font-size="18" fill="#463c1e">24,169.5</text>
        <rect x="1840" y="297" width="75" height="21" fill="url(#gold)" />
        <text x="1843" y="314" font-size="18">24,150.0</text>
        <rect x="1840" y="318" width="78" height="26" fill="#96f096" />
        <text x="1843" y="339" font-size="20">25m14s</text>
      </svg>
    </div>

    <footer class="bottom">
      <button class="draw" aria-label="Drawing tools">
        <svg width="48" height="38" viewBox="0 0 48 38"><path d="M12 28L16 11L22 30L28 13" fill="none" stroke="#333" stroke-width="1.500" /><path d="M11 7L29 23" stroke="#f00" stroke-width="2.500" /><path d="M11 32H27" stroke="#00b432" stroke-width="2" /><path d="M25 25L33 8L40 12L32 27L26 31Z" fill="#ffd23c" stroke="#785a14" /><path d="M33 8L35 6L41 9L40 12Z" fill="#d2c8be" stroke="#8c7864" /></svg>
      </button>
      <button v-for="a in leftActions" :key="a.name" class="act left" :aria-label="a.name"><svg width="41" height="38" viewBox="0 0 41 38" v-html="a.art"></svg></button>
      <button class="collapse" aria-label="Collapse"><svg width="16" height="14" viewBox="0 0 16 14"><path d="M7 1L1 7L7 13M14 1L8 7L14 13" fill="none" stroke="#444" stroke-width="1.500" /></svg></button>
      <div class="scroll">
        <button aria-label="Scroll left"><svg class="chev side" viewBox="0 0 6 10"><path d="M5 1L1 5L5 9" /></svg></button>
        <span class="track"></span>
        <span class="thumb"></span>
        <button aria-label="Scroll right"><svg class="chev side" viewBox="0 0 6 10"><path d="M1 1L5 5L1 9" /></svg></button>
      </div>
      <button v-for="a in rightActions" :key="a.name" class="act right" :aria-label="a.name"><svg width="42" height="38" viewBox="0 0 42 38" v-html="a.art"></svg></button>
    </footer>
  </div>
</template>

<style>
body {
  margin: 0;
}
</style>

<style scoped>
.app {
  box-sizing: border-box;
  display: flex;
  flex-direction: column;
  height: 100vh;
  border: 1px solid #465f6e;
  border-right-width: 2px;
  background: #9bb8c6;
  font-family: "Liberation Sans", Arial, sans-serif;
  font-size: 18px;
  color: #000;
}

button,
select {
  margin: 0;
  padding: 0;
  border: 0;
  background: none;
  color: inherit;
  font: inherit;
}

svg {
  display: block;
}

.toolbar {
  display: flex;
  height: 39px;
  flex: none;
  border-bottom: 2px solid #465f6e;
  background: linear-gradient(#b9d7e4, #9bbac8);
  font-weight: 700;
}

.cell {
  box-sizing: border-box;
  display: flex;
  flex: none;
  align-items: center;
  border-right: 1px solid #78919e;
}

.w-style { width: 41px; justify-content: center; }
.w-link { width: 55px; gap: 6px; padding-left: 4px; }
.w-symbol { width: 77px; padding: 0 12px 0 5px; }
.w-periods { width: 252px; gap: 6px; padding-left: 5px; }
.w-frame { width: 100px; padding: 0 6px 0 7px; }
.w-count { width: 87px; padding-left: 6px; }
.w-units { width: 119px; padding: 0 6px 0 7px; }
.w-ind { width: 145px; padding-left: 10px; }

.plain {
  display: flex;
  align-items: center;
}

.pick select {
  flex: 1;
  min-width: 0;
  appearance: none;
}

.chev {
  width: 10px;
  height: 6px;
  flex: none;
  overflow: visible;
  fill: none;
  stroke: #000;
  stroke-width: 2;
}

.chev.dim { stroke: #6e8791; }

.chev.side {
  width: 6px;
  height: 10px;
  stroke-width: 3;
}

.chip {
  box-sizing: border-box;
  height: 25px;
  border: 1px solid #7892a0;
  border-radius: 4px;
  box-shadow: inset 0 0 0 1px #9db7c4;
  text-align: center;
  white-space: nowrap;
}

.chip.on { background: #92a7b3; }
.chip.wide { width: 75px; }
.indicators { gap: 8px; }
.drop { width: 23px; justify-content: center; }

.quote {
  display: flex;
  flex: 1;
  align-items: center;
  gap: 9px;
  padding: 0 0 4px 10px;
  font-weight: 400;
  white-space: nowrap;
}

.info { padding-top: 6px; }
.last { color: #a80000; }

.live {
  box-sizing: border-box;
  width: 14px;
  height: 14px;
  margin-top: 6px;
  border: 1px solid #d8f0d0;
  border-radius: 50%;
  background: #4ba000;
}

.window-buttons {
  display: flex;
  align-items: center;
  gap: 8px;
  padding-right: 8px;
}

.body {
  display: flex;
  flex: 1;
  min-height: 0;
  border-top: 1px solid #8296a0;
}

.tools {
  display: flex;
  width: 48px;
  flex: none;
  flex-direction: column;
  border-right: 2px solid #788f9b;
}

.fold {
  display: flex;
  height: 19px;
  flex: none;
  align-items: center;
  justify-content: center;
  border-bottom: 1px solid #788f9b;
}

.fold.more {
  border-top: 1px solid #788f9b;
  background: linear-gradient(#b9d7e4, #9bbac8);
}

.tool-list {
  flex: 1;
  min-height: 0;
  padding-top: 4px;
  overflow: hidden;
}

.tool {
  display: block;
  width: 48px;
  height: 42px;
}

.tool.tall { height: 54px; flex: none; }
.tool.dots { height: 48px; flex: none; }

.chart {
  flex: 1;
  min-width: 0;
  height: 100%;
}

.chart text { font-weight: 700; }
.chart .source { font-weight: 400; }

.bottom {
  display: flex;
  height: 39px;
  flex: none;
  border-top: 2px solid #788f9b;
}

.draw {
  width: 50px;
  border-right: 2px solid #788f9b;
  background: #92a7b3;
}

.act.left { width: 41px; }
.act.right { width: 42px; }
.act.right:last-child { width: 38px; overflow: hidden; }

.collapse {
  display: flex;
  width: 21px;
  align-items: center;
  justify-content: center;
}

.scroll {
  box-sizing: border-box;
  display: flex;
  flex: 1;
  height: 23px;
  margin: 6px 8px 0 2px;
  border: 1px solid #788f9b;
  border-radius: 3px;
}

.scroll button {
  display: flex;
  width: 24px;
  align-items: center;
  justify-content: center;
  background: linear-gradient(#b9d7e4, #a5c6d4);
}

.track { flex: 1; border-left: 1px solid #788f9b; }

.thumb {
  width: 24px;
  border: 1px solid #788f9b;
  border-width: 0 1px;
  background: linear-gradient(#b9d7e4, #a5c6d4);
}
</style>
